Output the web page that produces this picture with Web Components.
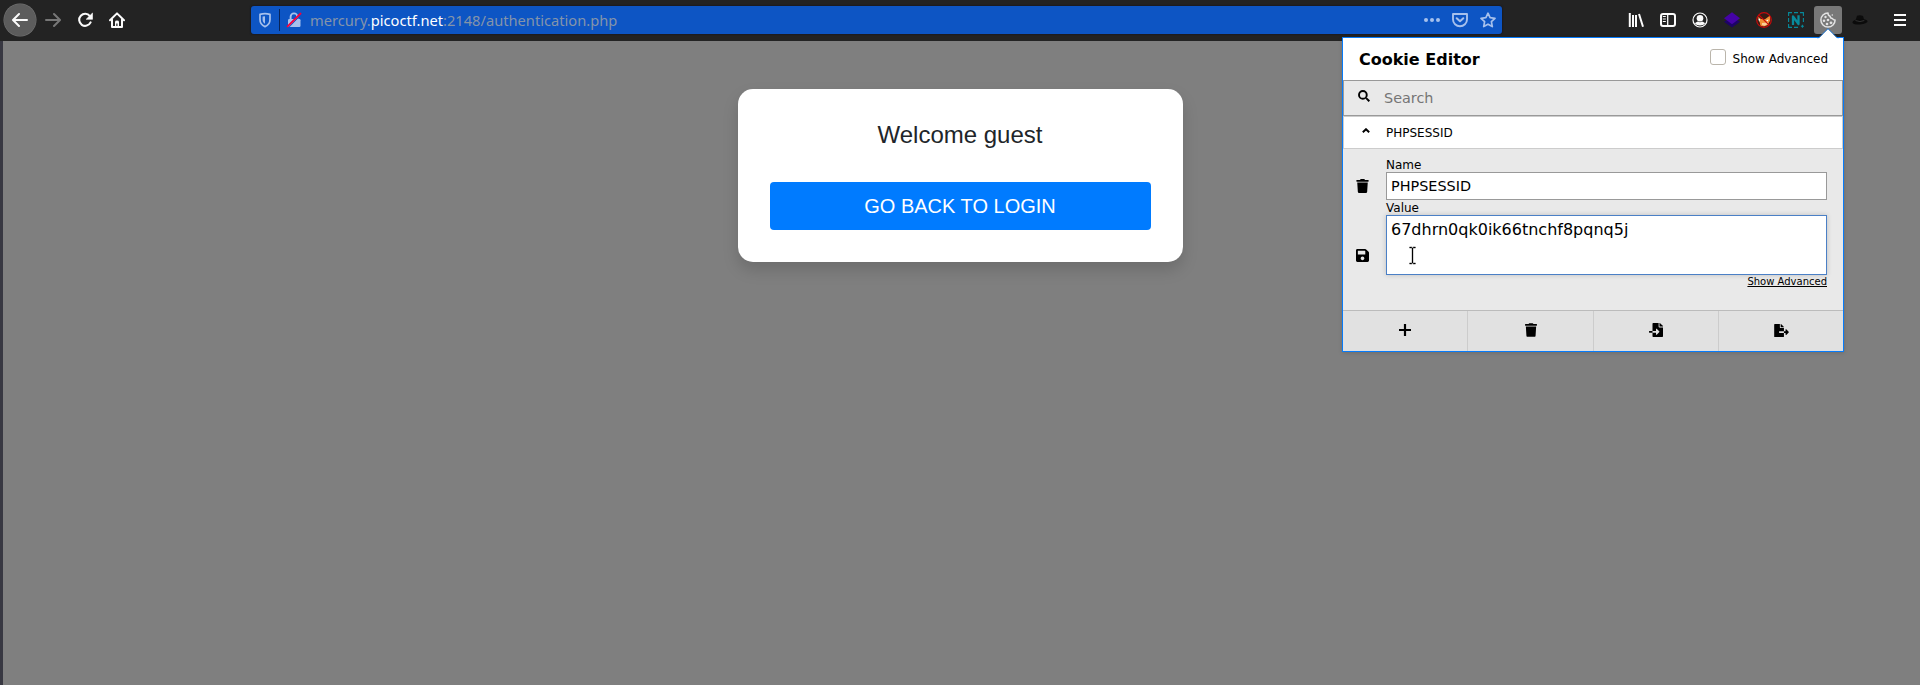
<!DOCTYPE html>
<html lang="en">
<head>
<meta charset="utf-8">
<title>Authentication</title>
<style>
html,body{margin:0;height:100%;overflow:hidden;background:#7f7f7f}
</style>
</head>
<body>
<browser-window>
  <browser-toolbar slot="toolbar"></browser-toolbar>
  <welcome-card>
    <span slot="title">Welcome guest</span>
    <span slot="action">GO BACK TO LOGIN</span>
  </welcome-card>
  <cookie-popup slot="popup"></cookie-popup>
</browser-window>
<script>
const define = (name, css, html) => customElements.define(name, class extends HTMLElement {
  constructor() {
    super();
    this.attachShadow({mode: 'open'}).innerHTML = `<style>*,:host{box-sizing:border-box}${css}</style>${html}`;
  }
});

const ICONS = {
  back: ['0 0 16 16', '<path d="M15 8H1.5M7 2L1 8l6 6" fill="none" stroke="currentColor" stroke-width="2" stroke-linecap="round" stroke-linejoin="round"/>'],
  forward: ['0 0 16 16', '<path d="M1 8h13.5M9 2l6 6-6 6" fill="none" stroke="currentColor" stroke-width="2" stroke-linecap="round" stroke-linejoin="round"/>'],
  reload: ['0 0 16 16', '<path d="M12.9 4.1A6 6 0 1 0 13.6 10.4" fill="none" stroke="currentColor" stroke-width="2.1" stroke-linecap="round"/><path d="M15.5 1v6.3h-6.3z" fill="currentColor" stroke="currentColor" stroke-width=".6" stroke-linejoin="round"/>'],
  home: ['0 0 16 16', '<path d="M1 8.3L8 1.4l7 6.9M3 7.5V15h10V7.5" fill="none" stroke="currentColor" stroke-width="2" stroke-linecap="round" stroke-linejoin="round"/><path d="M6 15V9.8Q6 8.5 8 8.5t2 1.3V15z" fill="currentColor"/><path d="M7.3 11.5h1.2V14H7.3z" fill="#232323"/>'],
  shield: ['0 0 16 16', '<path d="M8 1.6c1.8 0 3.4.3 5 .8V7.500c0 3.500-1.900 5.900-5 7.100-3.100-1.200-5-3.600-5-7.100V2.400c1.600-.5 3.200-.8 5-.8z" fill="none" stroke="currentColor" stroke-width="1.700" stroke-linejoin="round"/><path d="M8 4.200v7.600c-1.600-1-2.400-2.400-2.400-4.400V4.600Q6.800 4.200 8 4.200z" fill="currentColor"/>'],
  lock: ['0 0 16 16', '<path d="M4.600 7V4.800a3.400 3.400 0 0 1 6.800 0V7" fill="none" stroke="currentColor" stroke-width="1.900"/><rect x="2" y="7" width="12.500" height="8" rx="1.200" fill="currentColor"/><path d="M2.600 15.600L15.400 2.600" stroke="#0d55c4" stroke-width="1"/><path d="M1.600 14.400L14.500 1.600" stroke="#f5003d" stroke-width="2" stroke-linecap="round"/>'],
  dots: ['0 0 16 16', '<g fill="currentColor"><circle cx="2" cy="8" r="2"/><circle cx="8" cy="8" r="2"/><circle cx="14" cy="8" r="2"/></g>'],
  pocket: ['0 0 16 16', '<path d="M1 2h14v5.500a7 6.700 0 0 1-14 0z" fill="none" stroke="currentColor" stroke-width="1.900" stroke-linejoin="round"/><path d="M4.700 6.200L8 9.300l3.300-3.100" fill="none" stroke="currentColor" stroke-width="2" stroke-linecap="round" stroke-linejoin="round"/>'],
  star: ['0 0 16 16', '<path d="M8 1.200l2.100 4.500 4.900.6-3.600 3.400.9 4.900L8 12.200l-4.300 2.400.9-4.900L1 6.300l4.900-.6z" fill="none" stroke="currentColor" stroke-width="1.700" stroke-linejoin="round"/>'],
  library: ['0 0 16 16', '<path d="M1.800 1v14M5 3v12M8 3v12M11 2l4 12.800" fill="none" stroke="currentColor" stroke-width="2"/>'],
  sidebar: ['0 0 16 16', '<rect x="1" y="2" width="14" height="12" rx="2" fill="none" stroke="currentColor" stroke-width="2"/><path d="M7.700 2v12" stroke="currentColor" stroke-width="1.300"/><path d="M2.800 4.500h3M2.800 7h3M2.800 9.500h3" stroke="currentColor"/>'],
  account: ['0 0 16 16', '<circle cx="8" cy="8" r="7" fill="none" stroke="currentColor" stroke-width="1.200"/><circle cx="8" cy="6.300" r="3.300" fill="currentColor"/><path d="M2.800 11.300Q5 9.500 6 9.500q2 1.400 4 0 1 0 3.200 1.800Q11.500 13.500 8 13.500T2.800 11.300z" fill="currentColor"/>'],
  layers: ['0 0 16 16', '<path d="M0 9.800L8 5l8 4.800-8 5.700z" fill="#1d0367"/><path d="M0 6.200L8 .2l8 6-8 6z" fill="#4503a6"/>'],
  fox: ['0 0 16 16', '<circle cx="8" cy="8.300" r="6.300" fill="#3b1a12"/><path d="M2 4.500L5 7l4 .2 5-3.800.2 5-2.400 4.600-3.800 1.500-3.600-.8L4 11.500z" fill="#f28f33"/><path d="M6 11l3.500-.2 2.300-1.300-.5 2.800-2.800 1.400-2.500-.8z" fill="#f9cf9c"/><path d="M2.200 6.500l2 .5-1 3zM10 8.600l2.600-1.300-.7 1.900z" fill="#fff"/><circle cx="8" cy="8" r="7.300" fill="none" stroke="#c90909" stroke-width="1.200"/><path d="M2.800 2.800l10.400 10.400" stroke="#c90909" stroke-width="1.200"/>'],
  wappal: ['0 0 16 16', '<path d="M.6 4V.6H4M6 .6h4M12 .6h3.400V4M15.400 6v4M.6 6v4M.6 12v3.400H4M6 15.400h4M14.400 12.700v3M12.900 14.200h3" fill="none" stroke="#078a9c" stroke-width="1.100"/><path d="M5 13V4.500l5.500 7.500V3.300" fill="none" stroke="#078a9c" stroke-width="2.300" stroke-linejoin="round"/>'],
  cookie: ['0 0 16 16', '<path d="M8 .9A7.100 7.100 0 1 0 15.100 8Q13.500 8.300 12.500 6.600 10.300 6.700 10 4.200 7.700 3.300 8 .9z" fill="none" stroke="currentColor" stroke-width="1.500" stroke-linejoin="round"/><g fill="currentColor"><circle cx="5.500" cy="5" r="1.200"/><circle cx="4" cy="8.700" r="1.300"/><circle cx="8" cy="8" r="1.300"/><circle cx="7" cy="12" r="1.300"/><circle cx="11" cy="10.800" r="1.400"/><circle cx="12.300" cy="3" r=".8"/></g>'],
  hat: ['0 0 16 16', '<path d="M3.500 8.500L5 3.700q3-.8 6 .2l1.200 4.200Q8 10.300 3.500 8.500z" fill="#0c0c0c"/><ellipse cx="8" cy="9.800" rx="7.600" ry="2.700" fill="#0b0b0b" transform="rotate(-5 8 9.800)"/><path d="M3.500 8.500q4.500 2.200 8.800 0" fill="none" stroke="#3b3b3b" stroke-width=".8"/>'],
  menu: ['0 0 12 12', '<path d="M0 1h12M0 6h12M0 11h12" stroke="currentColor" stroke-width="2"/>'],
  search: ['0 0 512 512', '<path d="M348 348L482 482" stroke="currentColor" stroke-width="85"/><circle cx="208" cy="208" r="165" fill="none" stroke="currentColor" stroke-width="82"/>'],
  chevron: ['0 0 8 5', '<path d="M.8 4.300L4 1.200l3.200 3.100" fill="none" stroke="currentColor" stroke-width="1.900"/>'],
  plus: ['0 0 12 12', '<path d="M6 .3v11.400M.3 6h11.400" stroke="currentColor" stroke-width="2.200" stroke-linecap="round"/>'],
  trash: ['0 0 448 512', '<path fill="currentColor" d="M432 32H312l-9.400-18.700A24 24 0 0 0 281.100 0H166.800a23.720 23.720 0 0 0-21.400 13.300L136 32H16A16 16 0 0 0 0 48v32a16 16 0 0 0 16 16h416a16 16 0 0 0 16-16V48a16 16 0 0 0-16-16zM53.200 467a48 48 0 0 0 47.900 45h245.800a48 48 0 0 0 47.900-45L416 128H32z"/>'],
  save: ['0 32 448 448', '<path fill="currentColor" d="M433.941 129.941l-83.882-83.882A48 48 0 0 0 316.118 32H48C21.490 32 0 53.490 0 80v352c0 26.510 21.490 48 48 48h352c26.510 0 48-21.490 48-48V163.882a48 48 0 0 0-14.059-33.941zM224 416c-35.346 0-64-28.654-64-64s28.654-64 64-64 64 28.654 64 64-28.654 64-64 64zm96-304.520V212c0 6.627-5.373 12-12 12H76c-6.627 0-12-5.373-12-12V108c0-6.627 5.373-12 12-12h228.520c3.183 0 6.235 1.264 8.485 3.515l3.480 3.480A11.996 11.996 0 0 1 320 111.480z"/>'],
  import: ['0 0 512 512', '<path fill="currentColor" d="M16 288c-8.800 0-16 7.200-16 16v32c0 8.800 7.200 16 16 16h112v-64H16zm489-183L407.100 7c-4.500-4.500-10.600-7-17-7H384v128h128v-6.100c0-6.300-2.500-12.400-7-16.900zm-153 31V0H152c-13.300 0-24 10.700-24 24v264h128v-65.200c0-14.300 17.300-21.400 27.400-11.300L379 308c6.600 6.700 6.600 17.400 0 24l-95.700 96.400c-10.100 10.100-27.400 3-27.400-11.300V352H128v136c0 13.300 10.700 24 24 24h336c13.300 0 24-10.700 24-24V160H376c-13.200 0-24-10.800-24-24z"/>'],
  export: ['0 0 576 512', '<path fill="currentColor" d="M384 121.900c0-6.300-2.500-12.400-7-16.900L279.100 7c-4.500-4.500-10.600-7-17-7H256v128h128zM571 308l-95.700-96.400c-10.100-10.100-27.400-3-27.400 11.300V288h-64v64h64v65.200c0 14.300 17.300 21.400 27.400 11.300L571 332c6.600-6.600 6.600-17.400 0-24zm-379 28v-32c0-8.800 7.200-16 16-16h176V160H248c-13.200 0-24-10.800-24-24V0H24C10.700 0 0 10.700 0 24v464c0 13.300 10.700 24 24 24h336c13.300 0 24-10.700 24-24V352H208c-8.800 0-16-7.200-16-16z"/>'],
  ibeam: ['0 0 9 19', '<path d="M1.500 1.500h2l1 1 1-1h2M4.500 2v15M1.500 17.500h2l1-1 1 1h2" fill="none" stroke="#999" stroke-width="1.800"/><path d="M1.500 1.500h2l1 1 1-1h2M4.500 2v15M1.500 17.500h2l1-1 1 1h2" fill="none" stroke="#000" stroke-width="1"/>']
};

customElements.define('ui-icon', class extends HTMLElement {
  constructor() { super(); this.attachShadow({mode: 'open'}); }
  connectedCallback() {
    const [box, art] = ICONS[this.getAttribute('name')];
    const w = this.getAttribute('w') || 16, h = this.getAttribute('h') || w;
    this.shadowRoot.innerHTML = `<style>:host{display:flex;align-items:center;justify-content:center;flex:none}svg{display:block}</style><svg width="${w}" height="${h}" viewBox="${box}">${art}</svg>`;
  }
});

define('browser-window', `
  :host{display:flex;flex-direction:column;height:100vh;position:relative;background:#7f7f7f;overflow:hidden}
  main{flex:1;border-left:3px solid #383842;padding:48px 2px 0 0;display:flex;justify-content:center;align-items:flex-start}
  .popup{position:absolute;left:1342px;top:37px}
`, `<slot name="toolbar"></slot><main><slot></slot></main><div class="popup"><slot name="popup"></slot></div>`);

define('browser-toolbar', `
  :host{display:flex;align-items:center;height:41px;padding:0 0 1px 4px;background:#232323;color:#fbfbfb;flex:none}
  .b{width:32px;height:32px}
  .back{background:#5c5c5c;border-radius:50%;box-shadow:0 0 0 .5px #777}
  .fwd{width:34px;color:#777}
  .rel{width:30px}
  .home{width:34px}
  url-bar{margin:0 118px 0 117px}
  .on{width:28px;height:28px;margin:0 2px;background:#787878;border-radius:3px;color:#e2e2e2}
  i{width:1px;height:34px;background:#555;margin:0 0 0 3px}
  .menu{width:42px}
`, `<ui-icon class="b back" name="back"></ui-icon><ui-icon class="b fwd" name="forward"></ui-icon>
<ui-icon class="b rel" name="reload"></ui-icon><ui-icon class="b home" name="home"></ui-icon>
<url-bar></url-bar>
<ui-icon class="b" name="library"></ui-icon><ui-icon class="b" name="sidebar"></ui-icon><ui-icon class="b" name="account"></ui-icon><ui-icon class="b" name="layers"></ui-icon><ui-icon class="b" name="fox"></ui-icon><ui-icon class="b" name="wappal"></ui-icon><ui-icon class="on" name="cookie"></ui-icon><ui-icon class="b" name="hat"></ui-icon><i></i><ui-icon class="menu" name="menu" w="12"></ui-icon>`);

define('url-bar', `
  :host{display:flex;align-items:center;width:1251px;height:28px;flex:none;border-radius:3px;background:#0d55c4;color:#a6c0ec;padding:0 6px;box-shadow:0 0 1px 1px #1c1c22;font:14.67px/28px "Noto Sans",sans-serif}
  i{width:1px;height:22px;background:#082458;margin:0 6px 0 6px}
  p{margin:0 0 0 8px;color:#8494aa;flex:1;white-space:nowrap} b{font-weight:400;color:#fff}
  .r{display:flex;gap:12px}
`, `<ui-icon name="shield"></ui-icon><i></i><ui-icon name="lock"></ui-icon><p>mercury.<b>picoctf.net</b>:2148/authentication.php</p><div class="r"><ui-icon name="dots"></ui-icon><ui-icon name="pocket"></ui-icon><ui-icon name="star"></ui-icon></div>`);

define('welcome-card', `
  :host{display:flex;flex-direction:column;width:445px;height:173px;padding:32px;border-radius:15px;background:#fff;box-shadow:0 8px 16px rgba(0,0,0,.15);font-family:"Liberation Sans",Arial,sans-serif;text-align:center}
  h5{margin:0 0 34px;padding-right:1px;font:400 24px/27px "Liberation Sans",Arial,sans-serif;color:#212529}
  a{display:block;height:48px;line-height:48px;padding-right:1px;font-size:20px;color:#fff;background:#007bff;border-radius:4px}
`, `<h5><slot name="title"></slot></h5><a><slot name="action"></slot></a>`);

define('cookie-popup', `
  :host{display:block;position:relative;width:502px;height:315px;border:1px solid #067bfa;background:#e9e9e9;color:#000;font:12px/14px "DejaVu Sans",sans-serif;box-shadow:0 1px 4px rgba(0,0,0,.15)}
  .arrow{position:absolute;left:474px;top:-10px;display:block}
  header{height:42px;background:#fff;display:flex;align-items:center;padding:0 15px 0 16px}
  h1{font-size:16px;line-height:20px;margin:0;padding-top:1px;flex:1}
  .cb{width:16px;height:16px;border:1px solid #bab5ab;border-radius:3px;margin:-4px 7px 0 0}
  .search{height:36px;border:1px solid #999;display:flex;align-items:center;font-size:14.4px;color:#757575;padding-left:14px}
  .search ui-icon{color:#000;margin:-4px 14px 0 0}
  .search span{padding-bottom:1px}
  .row{height:33px;background:#fff;border:1px solid #ccc;display:flex;align-items:center;padding-left:18px}
  .row ui-icon{margin:-4px 16px 0 0}
  .body{height:161px;display:grid;grid-template-columns:43px 441px;grid-template-rows:23px 28px 15px 60px 15px}
  .body>*{min-width:0}
  .l1{grid-column:2;align-self:end}
  .in{background:#fff;border:1px solid #999;font-size:14.4px;line-height:26px;padding-left:4px}
  .ta{background:#fff;border:1px solid #4b80c6;font-size:16px;line-height:19px;padding:4px 0 0 4px;box-shadow:0 0 5px rgba(0,0,0,.18)}
  .ic{width:13px;margin-left:13px}
  .more{grid-column:2;justify-self:end;font-size:10px;line-height:13px;text-decoration:underline;text-underline-offset:1px}
  footer{height:41px;border-top:1px solid #bbb;background:#e1e1e1;display:grid;grid-template-columns:125px 126px 125px 124px}
  footer ui-icon{border-right:1px solid #ccc;padding-bottom:2px}
  footer ui-icon:last-child{border:0}
  .cursor{position:absolute;left:65px;top:208px}
`, `<svg class="arrow" width="22" height="11" viewBox="0 0 22 11"><path d="M.5 11v-.5h1L11 1l9.500 9.500h1v.5z" fill="#fff"/><path d="M.5 10L2 9.500L11 .7l9 8.800 1.500.5" fill="none" stroke="#0b7bf2" stroke-width=".8"/></svg>
<header><h1>Cookie Editor</h1><div class="cb"></div><span>Show Advanced</span></header>
<div class="search"><ui-icon name="search" w="12"></ui-icon><span>Search</span></div>
<div class="row"><ui-icon name="chevron" w="8" h="5"></ui-icon><span>PHPSESSID</span></div>
<div class="body"><div class="l1">Name</div>
<ui-icon class="ic" name="trash" w="13" h="14"></ui-icon><div class="in">PHPSESSID</div>
<div class="l1">Value</div>
<ui-icon class="ic" name="save" w="13" style="padding-top:21px"></ui-icon><div class="ta">67dhrn0qk0ik66tnchf8pqnq5j</div>
<div class="more">Show Advanced</div></div>
<footer><ui-icon name="plus" w="12"></ui-icon><ui-icon name="trash" w="12" h="14"></ui-icon><ui-icon name="import" w="14"></ui-icon><ui-icon name="export" w="15" h="13"></ui-icon></footer>
<ui-icon class="cursor" name="ibeam" w="9" h="19"></ui-icon>`);
</script>
</body>
</html>
